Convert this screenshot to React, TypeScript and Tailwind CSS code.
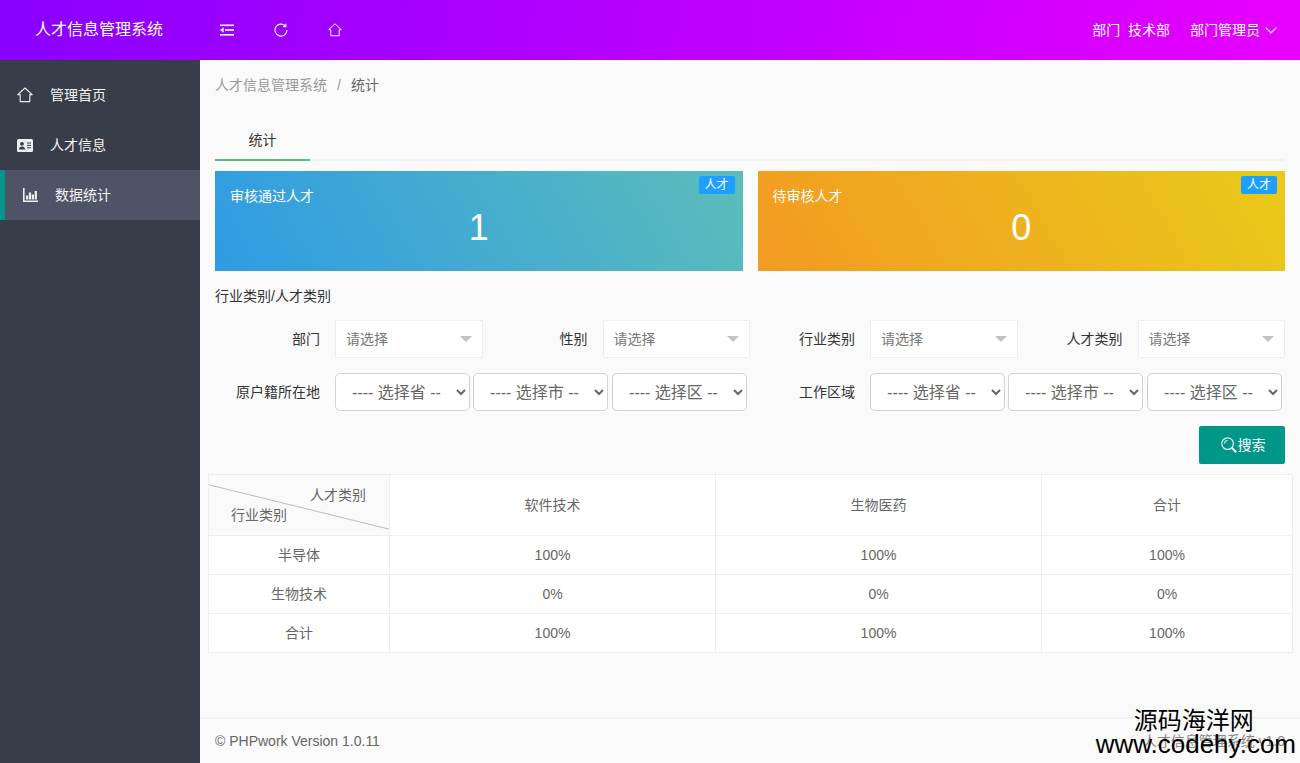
import React from "react";

const font = { fontFamily: '"Liberation Sans", "Noto Sans CJK SC", sans-serif' };

function HomeIcon({ className }: { className?: string }) {
  return (
    <svg viewBox="0 0 16 16" className={className} fill="none" stroke="currentColor" strokeWidth="1.1">
      <path d="M0.8 7.6 8 1l7.2 6.6h-2.4v7H3.2v-7H0.8Z" strokeLinejoin="round" />
    </svg>
  );
}

function ShrinkIcon() {
  return (
    <svg viewBox="0 0 14 12" className="h-3 w-[14px]" fill="white">
      <rect x="0" y="0.5" width="14" height="1.6" />
      <rect x="5" y="5.2" width="9" height="1.6" />
      <rect x="0" y="10" width="14" height="1.6" />
      <path d="M0 6 3.6 3.4v5.2Z" />
    </svg>
  );
}

function RefreshIcon() {
  return (
    <svg viewBox="0 0 14 14" className="h-[14px] w-[14px]" fill="none" stroke="white" strokeWidth="1.1">
      <path d="M11.3 2.9A6 6 0 1 0 13 7" />
      <path d="M11.9 0.8v2.8H9.1" />
    </svg>
  );
}

function IdIcon() {
  return (
    <svg viewBox="0 0 16 13" className="h-[13px] w-4">
      <rect x="0" y="0" width="16" height="13" rx="1.5" fill="#eceef0" />
      <circle cx="5" cy="4.8" r="1.9" fill="#393D49" />
      <path d="M1.8 10.4c.3-2.2 1.6-3 3.2-3s2.9.8 3.2 3Z" fill="#393D49" />
      <path d="M10 4h4M10 6.4h4M10 8.8h4" stroke="#393D49" strokeWidth="1" />
    </svg>
  );
}

function ChartIcon() {
  return (
    <svg viewBox="0 0 15 14" className="h-[14px] w-[15px]" fill="#f0f0f0">
      <path d="M0 0h1.6v12.4H15V14H0Z" />
      <rect x="3" y="7.5" width="2.2" height="4" />
      <rect x="5.9" y="4.5" width="2.2" height="7" />
      <rect x="8.8" y="6.5" width="2.2" height="5" />
      <rect x="11.7" y="3" width="2.2" height="8.5" />
    </svg>
  );
}

function Chevron() {
  return (
    <svg viewBox="0 0 12 7" className="h-[7px] w-3" fill="none" stroke="white" strokeWidth="1.2">
      <path d="M0.7 0.7 6 6l5.3-5.3" />
    </svg>
  );
}

function SearchIcon() {
  return (
    <svg viewBox="0 0 16 16" className="h-4 w-4" fill="none" stroke="#dff5f2" strokeWidth="1.2">
      <circle cx="6.6" cy="6.6" r="5.8" />
      <path d="M3.5 6.6a3.1 3.1 0 0 1 3.1-3.1" />
      <path d="m10.8 10.8 4.4 4.4" strokeWidth="2.2" />
    </svg>
  );
}

function NavItem({ icon, label, active }: { icon: React.ReactNode; label: string; active?: boolean }) {
  return active ? (
    <div className="flex h-[50px] items-center border-l-[5px] border-[#009688] bg-[#4E5465] pl-[18px] text-sm text-[#f2f2f2]">
      <span className="flex w-[32px] items-center">{icon}</span>
      {label}
    </div>
  ) : (
    <div className="flex h-[50px] items-center pl-[17px] text-sm text-[#f2f2f2]">
      <span className="flex w-[33px] items-center">{icon}</span>
      {label}
    </div>
  );
}

function StatCard({ title, value, gradient }: { title: string; value: string; gradient: string }) {
  return (
    <div className={`relative h-[100px] px-[15px] text-white ${gradient}`}>
      <span className="absolute right-2 top-[5px] flex h-[18px] w-9 items-center justify-center rounded-[2px] bg-[#1E9FFF] text-xs">人才</span>
      <div className="pt-[15px] text-sm leading-5">{title}</div>
      <div className="mt-[1px] text-center text-4xl leading-[42px]">{value}</div>
    </div>
  );
}

function FakeSelect({ label }: { label: string }) {
  return (
    <div className="flex h-[38px] items-center">
      <label className="w-[120px] pr-[15px] text-right text-sm text-[#333]">{label}</label>
      <div className="flex h-[38px] flex-1 items-center justify-between border border-[#eeeeee] bg-white pl-[10px] pr-[10px] text-sm text-[#777]">
        请选择
        <span className="h-0 w-0 border-x-[6px] border-t-[6px] border-x-transparent border-t-[#c2c2c2]" />
      </div>
    </div>
  );
}

function NativeSelect({ label }: { label: string }) {
  return (
    <select defaultValue={label} className="h-[38px] w-[135px] rounded-[5px] border border-[#ced4da] bg-white text-center text-base text-[#666]">
      <option>{label}</option>
    </select>
  );
}

function SelectGroup({ label, names }: { label: string; names: string[] }) {
  return (
    <div className="flex h-[38px] items-center">
      <label className="w-[120px] pr-[15px] text-right text-sm text-[#333]">{label}</label>
      <div className="flex gap-[3px] [&>*:last-child]:ml-[1px]">
        {names.map((n) => (
          <NativeSelect key={n} label={n} />
        ))}
      </div>
    </div>
  );
}

const rows = [
  ["半导体", "100%", "100%", "100%"],
  ["生物技术", "0%", "0%", "0%"],
  ["合计", "100%", "100%", "100%"],
];

export default function App() {
  const selects = ["---- 选择省 --", "---- 选择市 --", "---- 选择区 --"];
  return (
    <div className="flex h-[763px] w-[1300px] flex-col overflow-hidden bg-[#fafafa]" style={font}>
      <header className="flex h-[60px] shrink-0 items-center bg-[linear-gradient(100deg,#8800ff,#e800ff)] text-white">
        <div className="w-[200px] pl-[35px] text-base">人才信息管理系统</div>
        <div className="flex items-center pl-5">
          <span className="flex w-[54px]"><ShrinkIcon /></span>
          <span className="flex w-[54px]"><RefreshIcon /></span>
          <span className="flex w-[54px]"><HomeIcon className="h-[14px] w-[14px]" /></span>
        </div>
        <div className="ml-auto flex items-center pr-[23px] text-sm">
          <span>部门&nbsp;&nbsp;技术部</span>
          <span className="ml-5">部门管理员</span>
          <span className="ml-[5px] flex"><Chevron /></span>
        </div>
      </header>
      <div className="flex min-h-0 flex-1">
        <aside className="w-[200px] shrink-0 bg-[#393D49] pt-[10px]">
          <NavItem icon={<HomeIcon className="h-4 w-4 text-[#eee]" />} label="管理首页" />
          <NavItem icon={<IdIcon />} label="人才信息" />
          <NavItem icon={<ChartIcon />} label="数据统计" active />
        </aside>
        <main className="flex min-w-0 flex-1 flex-col">
          <div className="flex-1 px-[15px] pt-[15px]">
            <div className="flex h-5 items-center text-sm text-[#999]">
              人才信息管理系统
              <span className="mx-[10px] text-[#999]">/</span>
              <span className="text-[#666]">统计</span>
            </div>
            <div className="mt-[25px] flex h-[41px] border-b-2 border-[#f2f2f2]">
              <div className="-mb-[2px] flex w-[95px] items-center justify-center border-b-2 border-[#5FB878] text-sm text-[#333]">统计</div>
            </div>
            <div className="mt-[10px] grid grid-cols-2 gap-[15px]">
              <StatCard title="审核通过人才" value="1" gradient="bg-[linear-gradient(60deg,#2F9BE4,#5CBDBA)]" />
              <StatCard title="待审核人才" value="0" gradient="bg-[linear-gradient(60deg,#F39A22,#E9CA1A)]" />
            </div>
            <div className="mt-[15px] text-sm leading-5 text-[#333]">行业类别/人才类别</div>
            <div className="mt-[14px] grid grid-cols-4">
              <FakeSelect label="部门" />
              <FakeSelect label="性别" />
              <FakeSelect label="行业类别" />
              <FakeSelect label="人才类别" />
            </div>
            <div className="mt-[15px] grid grid-cols-2">
              <SelectGroup label="原户籍所在地" names={selects} />
              <SelectGroup label="工作区域" names={selects} />
            </div>
            <div className="mt-[15px] flex justify-end">
              <button className="flex h-[38px] w-[86px] items-center justify-center gap-[1px] rounded-[2px] bg-[#009688] pl-[2px] text-sm text-white">
                <SearchIcon />
                搜索
              </button>
            </div>
            <table className="mt-[10px] -ml-[7px] w-[1084px] table-fixed border-collapse bg-white text-sm text-[#666]">
              <colgroup>
                <col className="w-[181px]" />
                <col className="w-[326px]" />
                <col className="w-[326px]" />
                <col className="w-[251px]" />
              </colgroup>
              <thead>
                <tr className="h-[61px]">
                  <th className="relative border border-[#eeeeee] bg-[#fafafa] p-0 font-normal">
                    <svg className="absolute inset-0 h-full w-full" viewBox="0 0 181 61" preserveAspectRatio="none">
                      <line x1="0" y1="10" x2="181" y2="55" stroke="#bbbbbb" strokeWidth="1" />
                    </svg>
                    <span className="absolute right-[23px] top-[10px]">人才类别</span>
                    <span className="absolute left-[22px] top-[30px]">行业类别</span>
                  </th>
                  <th className="border border-[#eeeeee] font-normal">软件技术</th>
                  <th className="border border-[#eeeeee] font-normal">生物医药</th>
                  <th className="border border-[#eeeeee] font-normal">合计</th>
                </tr>
              </thead>
              <tbody>
                {rows.map((r) => (
                  <tr key={r[0]} className="h-[39px]">
                    {r.map((c, i) => (
                      <td key={i} className="border border-[#eeeeee] text-center">{c}</td>
                    ))}
                  </tr>
                ))}
              </tbody>
            </table>
          </div>
          <footer className="relative flex h-[46px] shrink-0 items-center justify-between border-t-2 border-[#f2f2f2] px-[15px] text-sm text-[#666]">
            <span>© PHPwork Version 1.0.11</span>
            <span className="text-[#888]">人才信息管理系统 v1.0</span>
            <div className="absolute bottom-[8px] right-[4px] flex flex-col items-center leading-none text-black">
              <span className="pr-[4px] text-2xl leading-[25px]">源码海洋网</span>
              <span className="text-[26px] leading-[22px]">www.codehy.com</span>
            </div>
          </footer>
        </main>
      </div>
    </div>
  );
}
